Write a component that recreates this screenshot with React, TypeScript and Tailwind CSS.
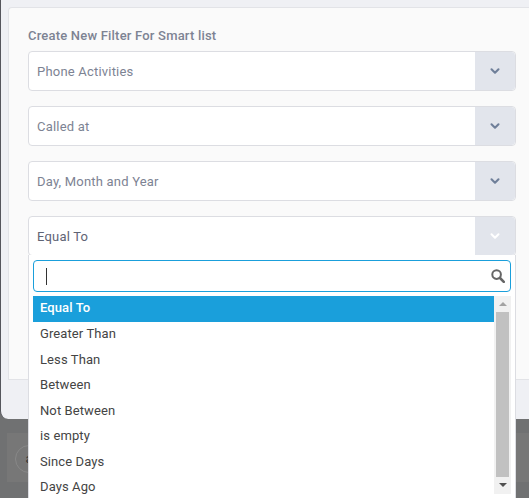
import { ChevronDown } from 'lucide-react';

const selects = ['Phone Activities', 'Called at', 'Day, Month and Year'];
const options = ['Greater Than', 'Less Than', 'Between', 'Not Between', 'is empty', 'Since Days', 'Days Ago'];

function SelectBox({ label, open }: { label: string; open?: boolean }) {
  return (
    <div className="flex h-10 rounded border border-[#dcdde2] bg-white">
      <div className={`flex flex-1 items-center pt-[2px] pl-2 text-[13px] tracking-[0.2px] ${open ? 'text-[#5f6475]' : 'text-[#7d8393]'}`}>{label}</div>
      <div className="flex w-10 items-center justify-center rounded-r bg-[#e2e5ec]">
        <ChevronDown size={14} strokeWidth={3.5} className={open ? 'text-white' : 'text-[#6f7f99]'} />
      </div>
    </div>
  );
}

export default function App() {
  return (
    <div className="relative h-[498px] w-[529px] overflow-hidden bg-[#707172] font-['Roboto',sans-serif]">
      <div className="h-[419px] rounded-bl-lg border-l border-[#55565c] bg-[#eff0f4] pt-[7px] pl-[7px]">
        <div className="h-[373px] rounded-tl border-t border-b border-l border-[#e2e3e7] bg-[#fafafa] pt-5 pr-[13px] pl-[19px]">
          <div className="mb-[7px] text-[13px] leading-[16px] font-medium tracking-[0.2px] text-[#7d8393]">Create New Filter For Smart list</div>
          <div className="flex flex-col gap-[15px]">
            {selects.map((s) => (
              <SelectBox key={s} label={s} />
            ))}
            <SelectBox label="Equal To" open />
          </div>
        </div>
      </div>

      {/* page behind the overlay */}
      <div className="mt-[14px] ml-[7px] h-[49px] bg-[#777777] pt-[12px] pl-[8px]">
        <div className="flex h-[28px] w-[28px] items-center justify-center rounded-full border border-[#888888] text-[13px] text-[#333]">
          a
        </div>
      </div>

      {/* open dropdown */}
      <div className="absolute top-[255px] left-[28px] h-[243px] w-[488px] border-x border-[#dcdde2] bg-white px-1 pt-[5px]">
        <div className="flex h-[32px] items-center justify-between rounded border border-[#1a9fdb] pr-[5px] pl-3">
          <div className="h-[17px] w-px bg-[#333]" />
          <svg width="14" height="14" viewBox="0 0 14 14" fill="none" stroke="#666666">
            <circle cx="5.6" cy="5.6" r="4.3" strokeWidth="2" />
            <path d="M9 9l3.8 3.8" strokeWidth="2.6" strokeLinecap="round" />
          </svg>
        </div>
        <div className="mt-1 flex">
          <div className="flex-1 text-[13px] tracking-[0.1px] text-[#444]">
            <div className="flex h-[26px] items-center bg-[#1a9fdb] pb-[2px] pl-[7px] font-medium text-white">Equal To</div>
            {options.map((o) => (
              <div key={o} className="flex h-[25.5px] items-center pb-[2px] pl-[7px]">{o}</div>
            ))}
          </div>
          <div className="flex h-[198px] w-[17px] flex-col items-center bg-[#f1f1f1]">
            <div className="mt-[6px] h-0 w-0 border-x-[4px] border-b-[4px] border-x-transparent border-b-[#a3a3a3]" />
            <div className="mt-[6px] h-[165px] w-[13px] bg-[#c1c1c1]" />
            <div className="mt-[6px] h-0 w-0 border-x-[4px] border-t-[4px] border-x-transparent border-t-[#505050]" />
          </div>
        </div>
      </div>
    </div>
  );
}
